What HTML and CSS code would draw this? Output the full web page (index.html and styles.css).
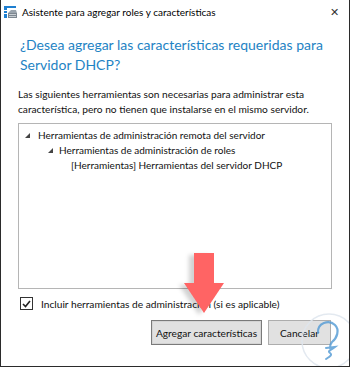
FILE: index.html
```html
<!DOCTYPE html>
<html lang="es">
<head>
    <meta charset="UTF-8">
    <meta name="viewport" content="width=device-width, initial-scale=1.0">
    <title>Asistente para agregar roles y características</title>
    <link rel="stylesheet" href="styles.css">
</head>
<body>
    <div class="window">
        <div class="titlebar">
            <svg class="app-icon" width="14" height="12" viewBox="0 0 14 12">
                <rect x="0" y="0" width="3" height="12" fill="#1e7fd0"/>
                <rect x="0" y="0" width="12" height="2" fill="#1e7fd0"/>
                <rect x="0" y="4" width="3" height="1" fill="#ffffff"/>
                <rect x="0" y="7" width="3" height="1" fill="#ffffff"/>
                <path d="M4 7 L7 4 L12 4 L13 7 Z" fill="#9aa4ad"/>
                <rect x="4" y="7" width="9" height="5" fill="#7d8790"/>
                <rect x="5" y="8" width="7" height="1" fill="#c8ced3"/>
                <rect x="5" y="10" width="7" height="1" fill="#c8ced3"/>
            </svg>
            <span class="title">Asistente para agregar roles y características</span>
            <span class="close">&#x2715;</span>
        </div>

        <div class="content">
            <h1 class="question">¿Desea agregar las características requeridas para<br>Servidor DHCP?</h1>
            <p class="info">Las siguientes herramientas son necesarias para administrar esta<br>característica, pero no tienen que instalarse en el mismo servidor.</p>

            <div class="tree">
                <div class="node level-1"><span class="expander"></span>Herramientas de administración remota del servidor</div>
                <div class="node level-2"><span class="expander"></span>Herramientas de administración de roles</div>
                <div class="node level-3">[Herramientas] Herramientas del servidor DHCP</div>
            </div>

            <label class="include">
                <span class="checkbox">
                    <svg width="9" height="8" viewBox="0 0 9 8">
                        <path d="M1 4 L3.5 6.5 L8 1" fill="none" stroke="#222" stroke-width="1.6"/>
                    </svg>
                </span>
                Incluir herramientas de administración (si es aplicable)
            </label>

            <div class="buttons">
                <button class="btn btn-default">Agregar características</button>
                <button class="btn btn-cancel">Cancelar</button>
            </div>
        </div>

        <div class="arrow">
            <div class="arrow-shaft"></div>
            <div class="arrow-head"></div>
        </div>

        <svg class="watermark" width="60" height="60" viewBox="0 0 60 60">
            <circle cx="30" cy="30" r="27" fill="none" stroke="#dfe6ee" stroke-width="1.5"/>
            <path d="M19 22 C18 12 30 8 36 14 C41 19 38 27 33 31 C31 33 31 35 31 37" fill="none" stroke="#5b9fd6" stroke-width="2.2" stroke-linecap="round"/>
            <path d="M27 37 L36 36 C32 39 28 40 31 42 C34 44 30 46 27 48" fill="none" stroke="#5b9fd6" stroke-width="2" stroke-linecap="round"/>
        </svg>
    </div>
</body>
</html>
```

FILE: styles.css
```css
body {
    margin: 0;
    font-family: 'Lato', 'Noto Sans', sans-serif;
    background: #ffffff;
}
.window {
    position: relative;
    width: 350px;
    height: 367px;
    box-sizing: border-box;
    border-left: 1px solid #2b2b2b;
    border-right: 1px solid #2b2b2b;
    border-bottom: 1px solid #2b2b2b;
    background: #ffffff;
    overflow: hidden;
}
.titlebar {
    display: flex;
    align-items: center;
    height: 24px;
    padding: 0 0 0 3px;
}
.app-icon {
    margin-right: 4px;
}
.title {
    font-size: 10px;
    color: #000000;
    flex: 1;
}
.close {
    width: 30px;
    text-align: center;
    font-size: 11px;
    color: #333333;
}
.content {
    padding: 0 17px 0 17px;
}
.question {
    margin: 11px 0 0 2px;
    font-size: 14px;
    font-weight: normal;
    line-height: 20px;
    color: #1e83c4;
}
.info {
    margin: 12px 0 0 0;
    font-size: 10.2px;
    line-height: 15px;
    color: #111111;
}
.tree {
    margin-top: 6px;
    height: 166px;
    box-sizing: border-box;
    border: 1px solid #b5b5b5;
    padding: 4px 0 0 6px;
}
.node {
    font-size: 10px;
    line-height: 15px;
    color: #111111;
    display: flex;
    align-items: center;
}
.expander {
    width: 0;
    height: 0;
    border-left: 5px solid transparent;
    border-bottom: 5px solid #444444;
    margin-right: 8px;
}
.level-2 {
    padding-left: 23px;
}
.level-2 .expander {
    margin-right: 6px;
}
.level-3 {
    padding-left: 46px;
}
.include {
    display: flex;
    align-items: center;
    margin-top: 8px;
    margin-left: 2px;
    font-size: 10.2px;
    color: #111111;
}
.checkbox {
    width: 11px;
    height: 11px;
    border: 1px solid #333333;
    display: flex;
    align-items: center;
    justify-content: center;
    margin-right: 8px;
}
.buttons {
    display: flex;
    justify-content: flex-end;
    gap: 6px;
    margin-top: 10px;
    margin-right: 1px;
}
.btn {
    height: 25px;
    padding: 0;
    font-family: 'Lato', 'Noto Sans', sans-serif;
    font-size: 10.2px;
    color: #111111;
    background: #e1e1e1;
    border: 1px solid #adadad;
}
.btn-default {
    width: 111px;
    border: 1px solid #7a7a7a;
    box-shadow: inset 0 0 0 1px #d4d4d4;
}
.btn-cancel {
    width: 63px;
}
.arrow {
    position: absolute;
    left: 183px;
    top: 253px;
    width: 40px;
    filter: drop-shadow(-5px 2px 2px rgba(0, 0, 0, 0.18));
}
.arrow-shaft {
    width: 20px;
    height: 30px;
    margin-left: 10px;
    background: #ff6464;
}
.arrow-head {
    width: 0;
    height: 0;
    border-left: 20px solid transparent;
    border-right: 20px solid transparent;
    border-top: 30px solid #ff6464;
}
.watermark {
    position: absolute;
    left: 298px;
    top: 311px;
    opacity: 0.85;
}
```
